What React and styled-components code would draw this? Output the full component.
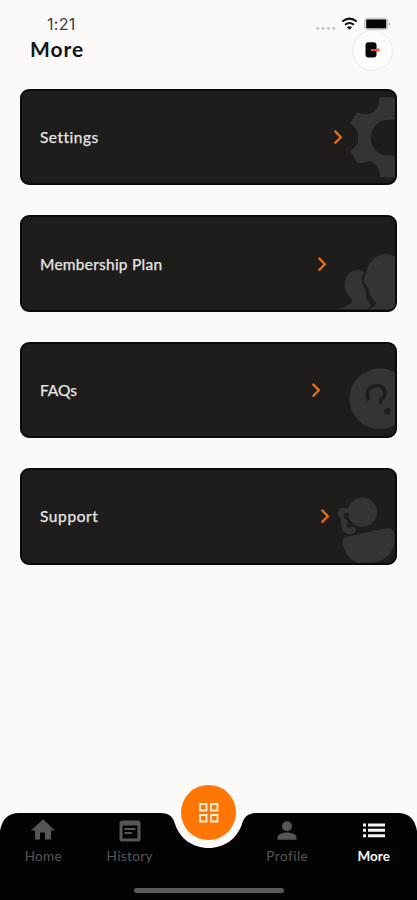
import React from 'react';
import styled, { createGlobalStyle } from 'styled-components';

const GlobalStyle = createGlobalStyle`
  * { box-sizing: border-box; }
  body { margin: 0; background: #fcfaf8; }
`;

const Screen = styled.div`
  width: 417px;
  height: 900px;
  display: flex;
  flex-direction: column;
  overflow: hidden;
  background: #fcfaf8;
  font-family: Lato, "Open Sans", sans-serif;
`;

const StatusBar = styled.div`
  height: 30px;
  padding: 14px 26px 0 47px;
  display: flex;
  justify-content: space-between;
`;

const Time = styled.span`
  font: 400 16px/20px Inter, sans-serif;
  letter-spacing: 0.3px;
  color: #3c3c3c;
`;

const StatusIcons = styled.svg`
  width: 75px;
  height: 18px;
  display: block;
`;

const Header = styled.header`
  height: 40px;
  padding: 0 24px 0 30px;
  display: flex;
  justify-content: space-between;
  align-items: center;
`;

const Title = styled.h1`
  margin: 0 0 2px;
  font-size: 21px;
  line-height: 28px;
  font-weight: 700;
  letter-spacing: 1px;
  color: #151515;
`;

const LogoutButton = styled.button`
  width: 41px;
  height: 41px;
  padding: 0;
  border: 1px solid #f1e8e6;
  border-radius: 50%;
  background: #fdfcfb;
  display: grid;
  place-items: center;
`;

const Menu = styled.main`
  flex: 1;
  padding: 19px 20px 0;
  display: flex;
  flex-direction: column;
  gap: 30px;
`;

const Card = styled.div`
  height: 96.4px;
  flex: none;
  padding-left: 18px;
  display: flex;
  align-items: center;
  overflow: hidden;
  border: 2px solid #0b0b0a;
  border-radius: 9px;
  background: #1e1d1b;
`;

const CardLabel = styled.span`
  flex: 1;
  font-size: 15.5px;
  line-height: 20px;
  letter-spacing: ${(p) => p.$spacing}px;
  -webkit-text-stroke: 0.25px currentColor;
  color: #e8e8e8;
`;

const Chevron = styled.svg`
  width: 16px;
  height: 18px;
  flex: none;
`;

const Art = styled.svg`
  width: ${(p) => p.$width}px;
  height: 92.4px;
  flex: none;
  fill: #353433;
`;

const BottomArea = styled.footer`
  position: relative;
  height: 87px;
  flex: none;
`;

const NavBar = styled.nav`
  height: 87px;
  padding-top: 5px;
  display: grid;
  grid-template-columns: 86.5px 86.5px 71px 86.5px 86.5px;
  background: #030303;
  clip-path: path("M0 87V18Q3 0 19 0H160C170 0 173 4 175 11C180 26 193 35 208.7 35C224 35 237 26 242 11C244 4 248 0 257 0H398Q414 0 417 18V87Z");
`;

const NavItem = styled.div`
  grid-column: ${(p) => p.$column};
  display: flex;
  flex-direction: column;
  align-items: center;
  color: ${(p) => (p.$active ? '#f6f6f6' : '#565658')};
`;

const NavIcon = styled.svg`
  width: 26px;
  height: 25px;
  fill: currentColor;
`;

const NavLabel = styled.span`
  margin-top: 4px;
  font-size: 13.5px;
  line-height: 18px;
  letter-spacing: ${(p) => p.$spacing}px;
  font-weight: ${(p) => (p.$active ? 700 : 400)};
`;

const CenterButton = styled.button`
  position: absolute;
  left: 181.3px;
  top: -27.7px;
  width: 54.8px;
  height: 54.8px;
  padding: 0;
  border: 0;
  border-radius: 50%;
  background: #ff7605;
  display: grid;
  place-items: center;
`;

const HomeIndicator = styled.div`
  position: absolute;
  left: 134px;
  bottom: 7px;
  width: 150px;
  height: 5.5px;
  border-radius: 3px;
  background: #5b5b5b;
`;

const GearArt = () => (
  <Art $width={49} viewBox="147 18 147 277">
    <path d="M250 37H300V103Q290 102 275 104A54 54 0 0 0 275 212L300 212V277H250L247 256Q236 232 215 228Q200 236 180 233L160 199Q180 182 183 172V146Q180 132 160 115L180 82Q200 90 217 86Q245 76 246 50Q246 38 250 37Z" />
  </Art>
);

const PeopleArt = () => (
  <Art $width={65.5} viewBox="97.5 22 196.5 277">
    <path d="M120 299Q158 286 164 276Q164 264 151 254Q138 238 143 215Q149 183 180 181Q194 181 200 190Q188 201 194 221Q208 243 205 265L220 285L210 299Z" />
    <path d="M212 299Q232 292 236 280L216 255Q217 240 202 221Q194 208 204 194Q213 148 249 135Q276 128 300 146V299Z" />
  </Art>
);

const QuestionArt = () => (
  <Art $width={71.5} viewBox="79.5 23 214.5 277">
    <circle cx="247" cy="187" r="91" />
    <path d="M214 191C203 171 214 149 235 148C258 147 268 166 258 183Q247 188 251 201" fill="none" stroke="#1e1d1b" strokeWidth="11" />
    <circle cx="270" cy="225" r="10" fill="#1e1d1b" />
  </Art>
);

const SupportArt = () => (
  <Art $width={62} viewBox="108 24.6 186 277">
    <circle cx="196" cy="151" r="44" />
    <path d="M123 150Q125 138 139 138Q153 137 162 146L150 155Q140 158 143 171L155 178Q145 194 155 200Q164 191 174 196Q181 210 164 217Q144 219 135 202Q129 180 132 170Q122 164 123 150Z" />
    <circle cx="148" cy="161" r="8" fill="#1e1d1b" />
    <path d="M137 239Q139 226 151 224C185 220 232 202 274 199Q293 198 293 221V241C289 275 261 298 229 303H180C156 292 142 273 137 239Z" />
  </Art>
);

const cards = [
  { label: 'Settings', spacing: 0.5, art: GearArt },
  { label: 'Membership Plan', spacing: 0.25, art: PeopleArt },
  { label: 'FAQs', spacing: -0.05, art: QuestionArt },
  { label: 'Support', spacing: 0.6, art: SupportArt },
];

const navItems = [
  { label: 'Home', column: 1, spacing: 0.3, icon: <path d="M10 22v-7h5v7h6v-9h4L13 1.8 1 13h4v9z" /> },
  {
    label: 'History', column: 2, spacing: 0.4,
    icon: <path fillRule="evenodd" d="M5 3h16a2.5 2.5 0 0 1 2.5 2.5v16A2.5 2.5 0 0 1 21 24H5a2.5 2.5 0 0 1-2.5-2.5v-16A2.5 2.5 0 0 1 5 3zM5.5 8v13h15V8zM7.5 10.5h11v2h-11zM7.5 14.5h7.5v2H7.5z" />,
  },
  {
    label: 'Profile', column: 4, spacing: 0.5,
    icon: <><circle cx="13" cy="8.7" r="5" /><path d="M3.5 22.3v-2.2c0-3.4 5.5-5 9.5-5s9.5 1.6 9.5 5v2.2z" /></>,
  },
  {
    label: 'More', column: 5, spacing: 0, active: true,
    icon: <path d="M2 6h3v3H2zM7 6h17v3H7zM2 11.3h3v3H2zM7 11.3h17v3H7zM2 16.7h3v3H2zM7 16.7h17v3H7z" />,
  },
];

export default function App() {
  return (
    <Screen>
      <GlobalStyle />
      <StatusBar>
        <Time>1:21</Time>
        <StatusIcons viewBox="316 14 75 18">
          <g fill="#c5c5c5">
            <circle cx="317.8" cy="28.3" r="1.5" /><circle cx="323" cy="28.3" r="1.5" />
            <circle cx="328.5" cy="28.3" r="1.5" /><circle cx="333.8" cy="28.3" r="1.5" />
          </g>
          <g fill="none" stroke="#141414" strokeWidth="2">
            <path d="M342.3 21.5Q349.5 15.8 356.7 21.5" />
            <path d="M345 24.7Q349.5 21.2 354 24.7" />
          </g>
          <path d="M349.5 29.8L346.9 27.3Q349.5 25.4 352.1 27.3Z" fill="#141414" />
          <rect x="364.7" y="18.3" width="23" height="11.2" rx="2.5" fill="#d5d4d3" stroke="#c4c4c4" />
          <rect x="366.2" y="19.6" width="20" height="8.6" rx="1" fill="#050505" />
          <path d="M389 22.2Q391.5 24 389 25.8Z" fill="#999" />
        </StatusIcons>
      </StatusBar>
      <Header>
        <Title>More</Title>
        <LogoutButton aria-label="Log out">
          <svg width="20" height="18" viewBox="0 0 20 18">
            <rect x="2.5" y="1.2" width="11" height="15.4" rx="3" fill="#090909" />
            <path d="M8 9H16.5" fill="none" stroke="#e8502f" strokeWidth="2" />
            <path d="M14.2 6.8L16.8 9L14.2 11.2" fill="none" stroke="#f08a70" strokeWidth="1.2" />
          </svg>
        </LogoutButton>
      </Header>
      <Menu>
        {cards.map(({ label, spacing, art: Picture }) => (
          <Card key={label}>
            <CardLabel $spacing={spacing}>{label}</CardLabel>
            <Chevron viewBox="0 0 16 18">
              <path d="M4.7 2.9L10.8 9.2L4.7 15.5" fill="none" stroke="#ed6d18" strokeWidth="2.3" />
            </Chevron>
            <Picture />
          </Card>
        ))}
      </Menu>
      <BottomArea>
        <NavBar>
          {navItems.map(({ label, column, spacing, active, icon }) => (
            <NavItem key={label} $column={column} $active={active}>
              <NavIcon viewBox="0 0.5 26 25">{icon}</NavIcon>
              <NavLabel $spacing={spacing} $active={active}>{label}</NavLabel>
            </NavItem>
          ))}
        </NavBar>
        <CenterButton aria-label="Dashboard">
          <svg width="22" height="22" viewBox="0 0 22 22" fill="none" stroke="#fff0dd" strokeWidth="1.8">
            <path d="M2 2h6.5v6.5H2zM13 2h6.5v6.5H13zM2 13h6.5v6.5H2zM13 13h6.5v6.5H13z" />
          </svg>
        </CenterButton>
        <HomeIndicator />
      </BottomArea>
    </Screen>
  );
}
